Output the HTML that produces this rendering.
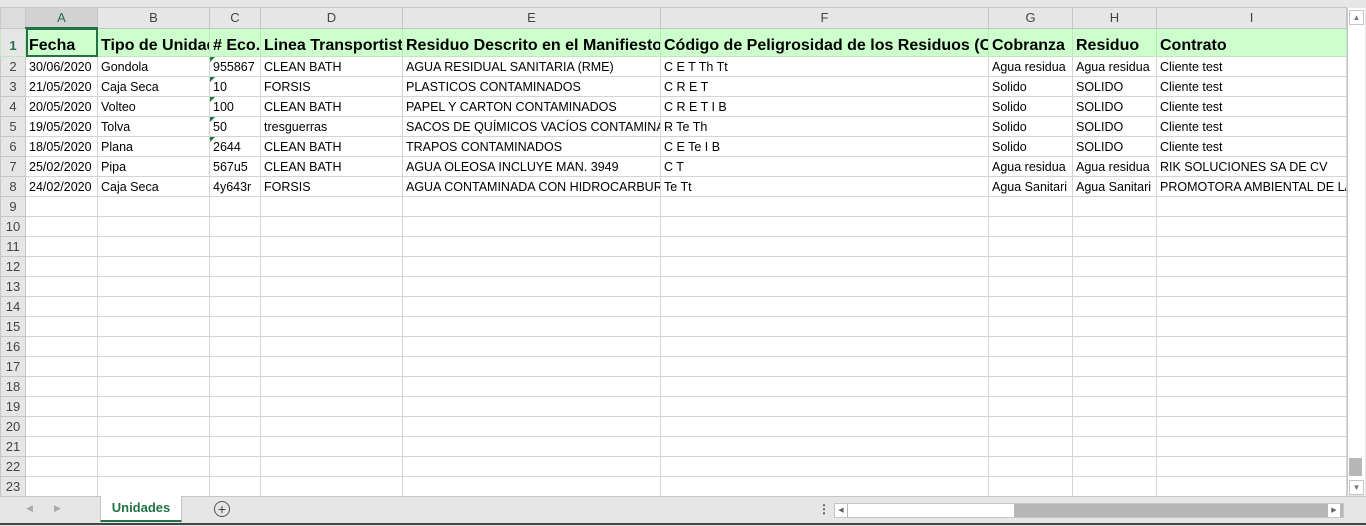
<!DOCTYPE html>
<html><head><style>
body{margin:0;width:1366px;height:525px;background:#e6e6e6;overflow:hidden;font-family:"Liberation Sans",sans-serif;position:relative}
table{position:absolute;left:0;top:7px;border-collapse:collapse;table-layout:fixed;width:1346px;background:#fff}
td{border:1px solid #d4d4d4;padding:0 0 0 3px;height:19px;font-size:12.5px;white-space:nowrap;overflow:hidden;color:#000}
tr.ch td{background:#e6e6e6;text-align:center;color:#444;font-size:13px;border-color:#c6c6c6;padding:0}
td.rh{background:#e6e6e6;text-align:center;color:#444;padding:0;border-color:#c6c6c6;font-size:13px}
tr.h td{background:#ccffcc;font-weight:bold;font-size:16px;height:20px;padding-top:7px;border-color:#bfe6bf}
tr.h td.rh{background:#e6e6e6;font-size:13px;color:#217346}
.g{position:relative}
.g:before{content:"";position:absolute;left:0;top:0;border-top:5px solid #1e7a3a;border-right:5px solid transparent}
</style></head><body>
<table>
<colgroup><col style="width:25px"><col style="width:72px"><col style="width:112px"><col style="width:51px"><col style="width:142px"><col style="width:258px"><col style="width:328px"><col style="width:84px"><col style="width:84px"><col style="width:190px"></colgroup>
<tr class="ch"><td style="background:#dcdcdc"></td><td style="background:#d2d2d2;color:#217346;border-bottom:2px solid #217346">A</td><td>B</td><td>C</td><td>D</td><td>E</td><td>F</td><td>G</td><td>H</td><td>I</td></tr>
<tr class="h"><td class="rh">1</td><td style="outline:2px solid #217346;outline-offset:-2px">Fecha</td><td>Tipo de Unidad</td><td># Eco.</td><td>Linea Transportista</td><td>Residuo Descrito en el Manifiesto</td><td>Código de Peligrosidad de los Residuos (C</td><td>Cobranza</td><td>Residuo</td><td>Contrato</td></tr>
<tr><td class="rh">2</td><td>30/06/2020</td><td>Gondola</td><td class="g">955867</td><td>CLEAN BATH</td><td>AGUA RESIDUAL SANITARIA (RME)</td><td>C E T Th Tt</td><td>Agua residua</td><td>Agua residua</td><td>Cliente test</td></tr>
<tr><td class="rh">3</td><td>21/05/2020</td><td>Caja Seca</td><td class="g">10</td><td>FORSIS</td><td>PLASTICOS CONTAMINADOS</td><td>C R E T</td><td>Solido</td><td>SOLIDO</td><td>Cliente test</td></tr>
<tr><td class="rh">4</td><td>20/05/2020</td><td>Volteo</td><td class="g">100</td><td>CLEAN BATH</td><td>PAPEL Y CARTON CONTAMINADOS</td><td>C R E T I B</td><td>Solido</td><td>SOLIDO</td><td>Cliente test</td></tr>
<tr><td class="rh">5</td><td>19/05/2020</td><td>Tolva</td><td class="g">50</td><td>tresguerras</td><td>SACOS DE QUÍMICOS VACÍOS CONTAMINADOS</td><td>R Te Th</td><td>Solido</td><td>SOLIDO</td><td>Cliente test</td></tr>
<tr><td class="rh">6</td><td>18/05/2020</td><td>Plana</td><td class="g">2644</td><td>CLEAN BATH</td><td>TRAPOS CONTAMINADOS</td><td>C E Te I B</td><td>Solido</td><td>SOLIDO</td><td>Cliente test</td></tr>
<tr><td class="rh">7</td><td>25/02/2020</td><td>Pipa</td><td>567u5</td><td>CLEAN BATH</td><td>AGUA OLEOSA INCLUYE MAN. 3949</td><td>C T</td><td>Agua residua</td><td>Agua residua</td><td>RIK SOLUCIONES SA DE CV</td></tr>
<tr><td class="rh">8</td><td>24/02/2020</td><td>Caja Seca</td><td>4y643r</td><td>FORSIS</td><td>AGUA CONTAMINADA CON HIDROCARBUROS</td><td>Te Tt</td><td>Agua Sanitari</td><td>Agua Sanitari</td><td>PROMOTORA AMBIENTAL DE LA</td></tr>
<tr><td class="rh">9</td><td></td><td></td><td></td><td></td><td></td><td></td><td></td><td></td><td></td></tr>
<tr><td class="rh">10</td><td></td><td></td><td></td><td></td><td></td><td></td><td></td><td></td><td></td></tr>
<tr><td class="rh">11</td><td></td><td></td><td></td><td></td><td></td><td></td><td></td><td></td><td></td></tr>
<tr><td class="rh">12</td><td></td><td></td><td></td><td></td><td></td><td></td><td></td><td></td><td></td></tr>
<tr><td class="rh">13</td><td></td><td></td><td></td><td></td><td></td><td></td><td></td><td></td><td></td></tr>
<tr><td class="rh">14</td><td></td><td></td><td></td><td></td><td></td><td></td><td></td><td></td><td></td></tr>
<tr><td class="rh">15</td><td></td><td></td><td></td><td></td><td></td><td></td><td></td><td></td><td></td></tr>
<tr><td class="rh">16</td><td></td><td></td><td></td><td></td><td></td><td></td><td></td><td></td><td></td></tr>
<tr><td class="rh">17</td><td></td><td></td><td></td><td></td><td></td><td></td><td></td><td></td><td></td></tr>
<tr><td class="rh">18</td><td></td><td></td><td></td><td></td><td></td><td></td><td></td><td></td><td></td></tr>
<tr><td class="rh">19</td><td></td><td></td><td></td><td></td><td></td><td></td><td></td><td></td><td></td></tr>
<tr><td class="rh">20</td><td></td><td></td><td></td><td></td><td></td><td></td><td></td><td></td><td></td></tr>
<tr><td class="rh">21</td><td></td><td></td><td></td><td></td><td></td><td></td><td></td><td></td><td></td></tr>
<tr><td class="rh">22</td><td></td><td></td><td></td><td></td><td></td><td></td><td></td><td></td><td></td></tr>
<tr><td class="rh">23</td><td></td><td></td><td></td><td></td><td></td><td></td><td></td><td></td><td></td></tr>
</table>
<div style="position:absolute;left:1347px;top:8px;width:17px;height:487px;background:#fff;border-left:1px solid #c6c6c6"></div>
<div style="position:absolute;left:1349px;top:10px;width:13px;height:13px;border:1px solid #c6c6c6;background:#fff;font-size:8px;color:#777;text-align:center;line-height:13px">▲</div>
<div style="position:absolute;left:1349px;top:458px;width:13px;height:18px;background:#b7b7b7"></div>
<div style="position:absolute;left:1349px;top:480px;width:13px;height:13px;border:1px solid #c6c6c6;background:#fff;font-size:8px;color:#777;text-align:center;line-height:13px">▼</div>
<div style="position:absolute;left:0;top:496px;width:1366px;height:29px;background:#e6e6e6;border-top:1px solid #c6c6c6"></div>
<div style="position:absolute;left:26px;top:503px;font-size:9px;color:#aaa">◀</div>
<div style="position:absolute;left:54px;top:503px;font-size:9px;color:#aaa">▶</div>
<div style="position:absolute;left:100px;top:496px;width:80px;height:24px;background:#fff;border:1px solid #c6c6c6;border-top:none;border-bottom:2px solid #217346;color:#217346;font-weight:bold;font-size:13px;text-align:center;line-height:24px">Unidades</div>
<div style="position:absolute;left:214px;top:501px;width:14px;height:14px;border:1px solid #555;border-radius:50%;text-align:center;line-height:14px;font-size:14px;color:#444">+</div>
<div style="position:absolute;left:818px;top:502px;font-size:12px;color:#555;font-weight:bold">⋮</div>
<div style="position:absolute;left:834px;top:503px;width:508px;height:13px;background:#b7b7b7;border:1px solid #c6c6c6"></div>
<div style="position:absolute;left:835px;top:504px;width:12px;height:13px;background:#fff;font-size:7px;color:#666;line-height:13px;text-align:center">◀</div>
<div style="position:absolute;left:848px;top:504px;width:166px;height:13px;background:#fff"></div>
<div style="position:absolute;left:1328px;top:504px;width:12px;height:13px;background:#fff;font-size:7px;color:#666;line-height:13px;text-align:center">▶</div>
<div style="position:absolute;left:0;top:523px;width:1366px;height:2px;background:#444"></div>
</body></html>
